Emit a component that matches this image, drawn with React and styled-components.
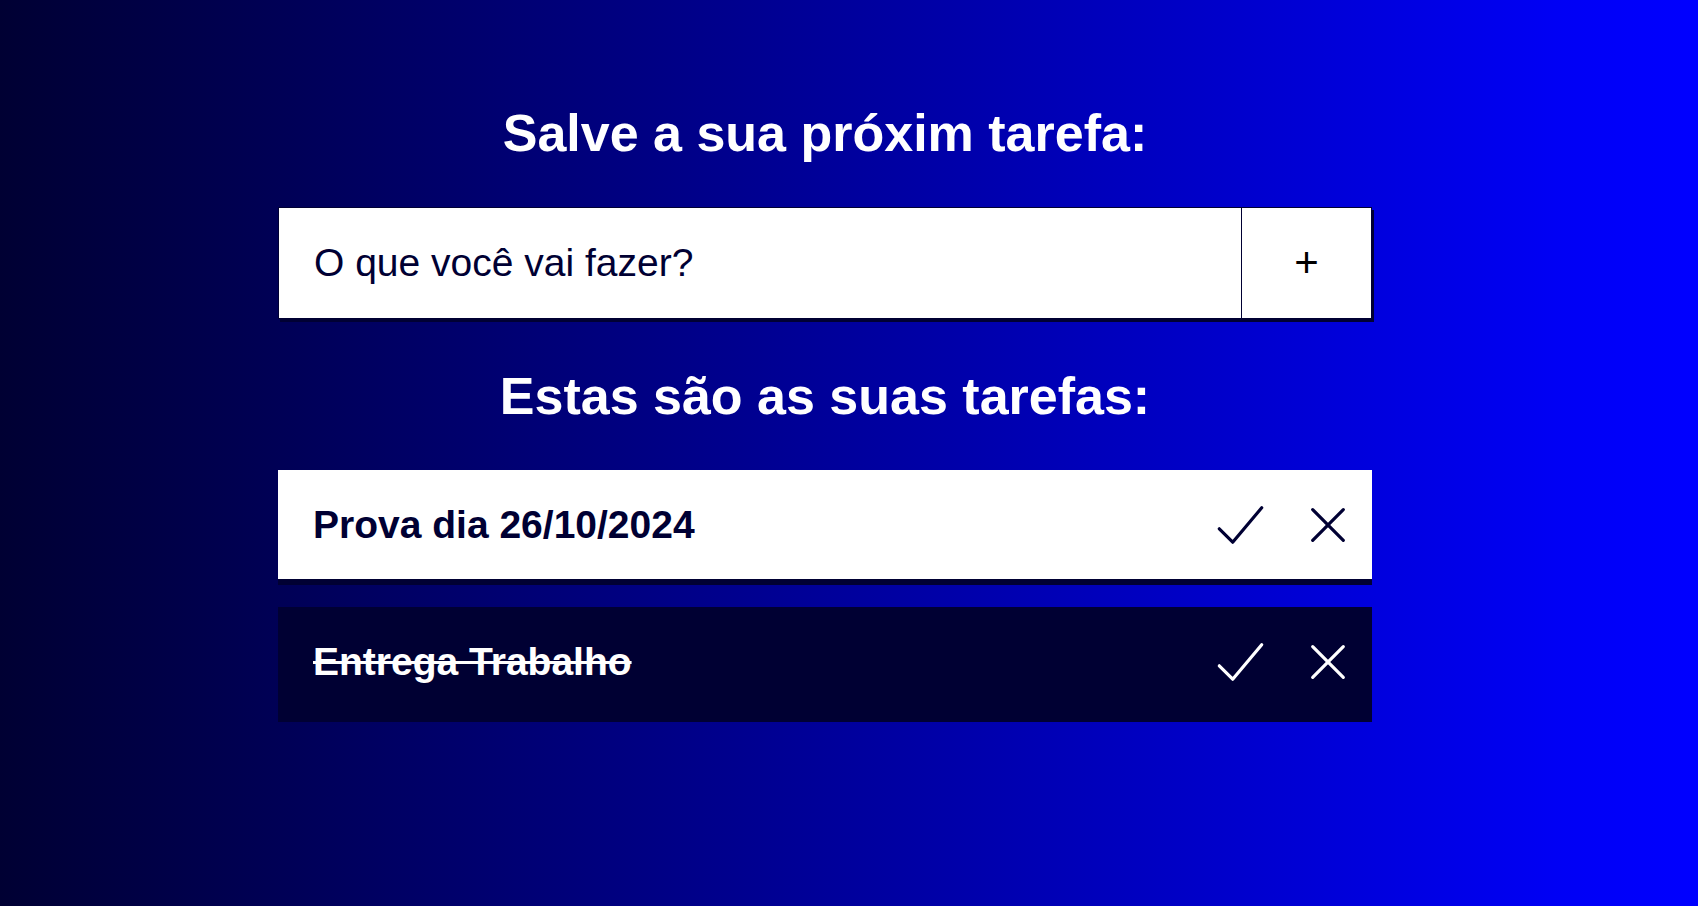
import React from "react";
import styled, { createGlobalStyle } from "styled-components";

const GlobalStyle = createGlobalStyle`
  html, body {
    margin: 0;
    padding: 0;
  }
  body {
    font-family: "Liberation Sans", Arial, sans-serif;
  }
  * { box-sizing: border-box; }
`;

const Page = styled.div`
  min-height: 100vh;
  background: linear-gradient(to right, #000033, #0000f5 92%, #0000ff);
  padding: 103px 0 0 278px;
`;

const Column = styled.main`
  width: 1094px;
  display: flex;
  flex-direction: column;
`;

const Title = styled.h1`
  margin: ${(p) => p.$mt || 0}px 0 ${(p) => p.$mb || 0}px;
  font-size: 52px;
  line-height: 60px;
  font-weight: 700;
  color: #ffffff;
  text-align: center;
`;

const Form = styled.form`
  display: flex;
  height: 112px;
  border: 1px solid #000033;
  box-shadow: 2px 3px 0 #000033;
  background: #ffffff;
`;

const TaskInput = styled.input`
  flex: 1;
  min-width: 0;
  border: none;
  outline: none;
  background: #ffffff;
  padding: 0 0 0 35px;
  font-family: "Liberation Sans", Arial, sans-serif;
  font-size: 39px;
  color: #000033;
  &::placeholder {
    color: #000033;
    opacity: 1;
  }
`;

const AddButton = styled.button`
  width: 130px;
  border: none;
  border-left: 1px solid #000033;
  background: #ffffff;
  font-family: "Liberation Sans", Arial, sans-serif;
  font-size: 42px;
  font-weight: 300;
  color: #000000;
  padding: 0;
  cursor: pointer;
`;

const List = styled.ul`
  list-style: none;
  margin: 0;
  padding: 0;
  display: flex;
  flex-direction: column;
  gap: 22px;
`;

const Item = styled.li`
  height: 115px;
  display: flex;
  align-items: center;
  padding: 0 25px 0 35px;
  background: ${(p) => (p.$done ? "#000033" : "#ffffff")};
  border-bottom: 6px solid #000033;
  color: ${(p) => (p.$done ? "#ffffff" : "#000033")};
`;

const ItemText = styled.span`
  flex: 1;
  font-size: 39px;
  font-weight: 700;
  text-decoration: ${(p) => (p.$done ? "line-through" : "none")};
`;

const Actions = styled.div`
  display: flex;
  align-items: center;
  gap: 44px;
`;

const IconButton = styled.button`
  display: flex;
  align-items: center;
  justify-content: center;
  border: none;
  background: transparent;
  padding: 0;
  color: inherit;
  cursor: pointer;
`;

const CheckIcon = () => (
  <svg width="49" height="42" viewBox="0 0 49 42" fill="none">
    <polyline
      points="3.3,24.8 16.7,38.2 45.7,3.8"
      stroke="currentColor"
      strokeWidth="3.2"
      strokeLinecap="round"
      strokeLinejoin="round"
    />
  </svg>
);

const XIcon = () => (
  <svg width="38" height="38" viewBox="0 0 38 38" fill="none">
    <path
      d="M3.7 3.6 L34.3 34.3 M34.3 3.6 L3.7 34.3"
      stroke="currentColor"
      strokeWidth="3.2"
      strokeLinecap="round"
    />
  </svg>
);

const tasks = [
  { id: 1, text: "Prova dia 26/10/2024", done: false },
  { id: 2, text: "Entrega Trabalho", done: true },
];

export default function App() {
  return (
    <>
      <GlobalStyle />
      <Page>
        <Column>
          <Title $mb={44}>Salve a sua próxim tarefa:</Title>
          <Form onSubmit={(e) => e.preventDefault()}>
            <TaskInput placeholder="O que você vai fazer?" />
            <AddButton type="submit">+</AddButton>
          </Form>
          <Title $mt={47} $mb={44}>Estas são as suas tarefas:</Title>
          <List>
            {tasks.map((t) => (
              <Item key={t.id} $done={t.done}>
                <ItemText $done={t.done}>{t.text}</ItemText>
                <Actions>
                  <IconButton aria-label="Concluir">
                    <CheckIcon />
                  </IconButton>
                  <IconButton aria-label="Remover">
                    <XIcon />
                  </IconButton>
                </Actions>
              </Item>
            ))}
          </List>
        </Column>
      </Page>
    </>
  );
}
